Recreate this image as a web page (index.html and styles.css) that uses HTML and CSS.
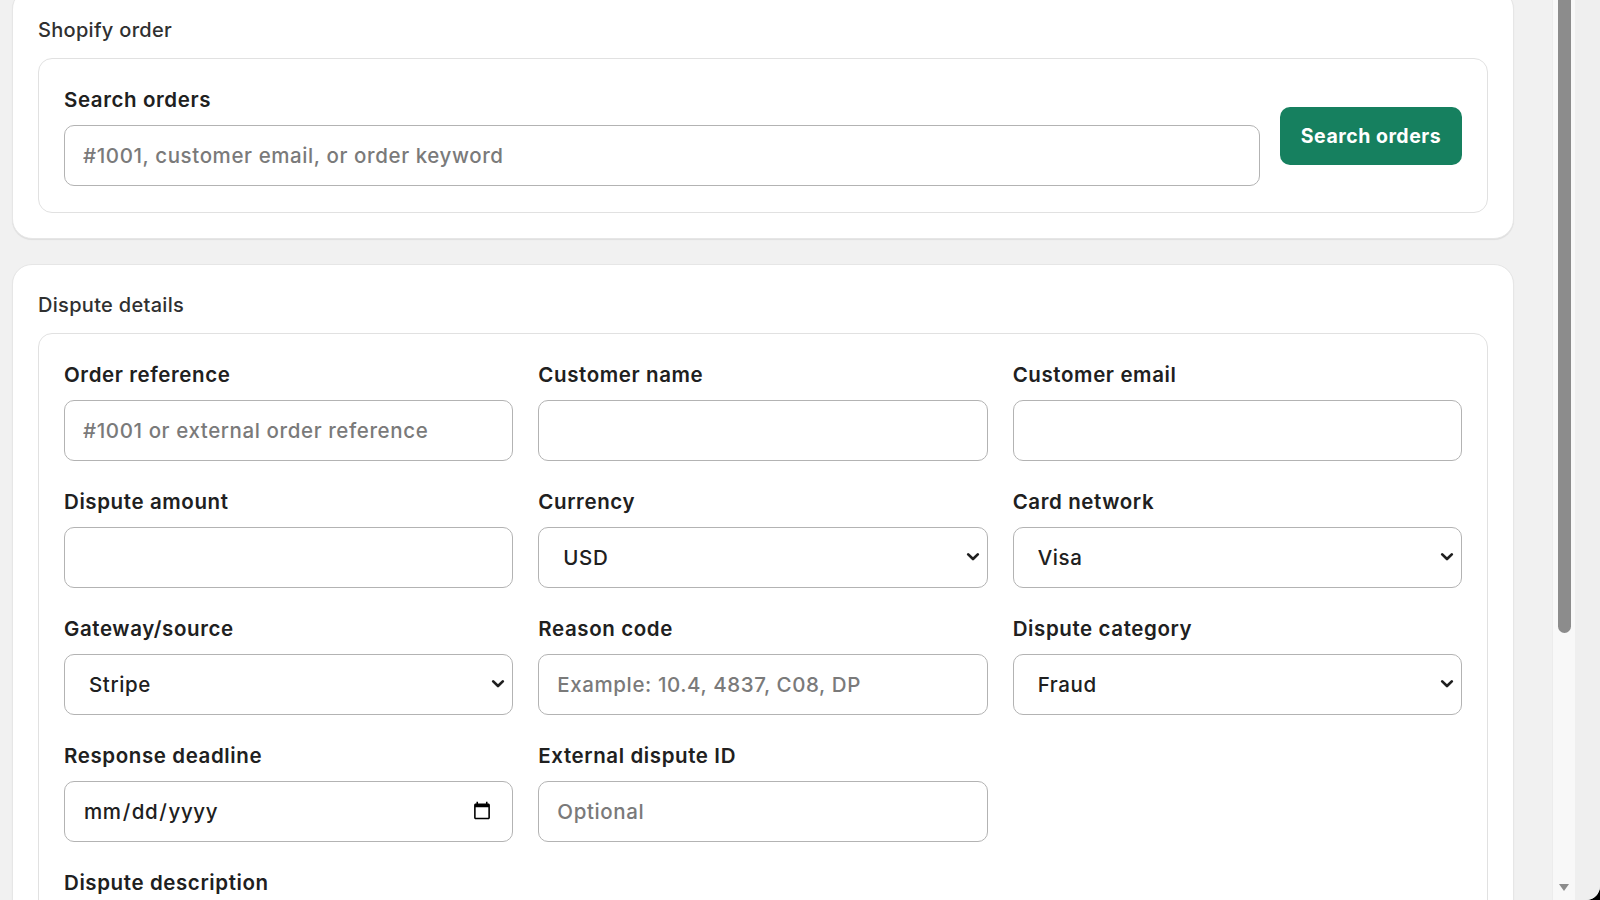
FILE: index.html
```html
<!DOCTYPE html>
<html lang="en">
<head>
<meta charset="utf-8">
<title>Dispute</title>
<link rel="stylesheet" href="styles.css">
</head>
<body>
  <main class="page">
    <div class="stack">
      <section class="card">
        <h2 class="card-title">Shopify order</h2>
        <div class="panel search-panel">
          <div class="field grow">
            <label class="label" for="q">Search orders</label>
            <input class="control" id="q" type="text" placeholder="#1001, customer email, or order keyword">
          </div>
          <button class="btn-primary" type="button">Search orders</button>
        </div>
      </section>

      <section class="card">
        <h2 class="card-title">Dispute details</h2>
        <div class="panel form-grid">
          <div class="field">
            <label class="label">Order reference</label>
            <input class="control" type="text" placeholder="#1001 or external order reference">
          </div>
          <div class="field">
            <label class="label">Customer name</label>
            <input class="control" type="text">
          </div>
          <div class="field">
            <label class="label">Customer email</label>
            <input class="control" type="email">
          </div>

          <div class="field">
            <label class="label">Dispute amount</label>
            <input class="control" type="text">
          </div>
          <div class="field">
            <label class="label">Currency</label>
            <div class="select-wrap">
              <select class="control select">
                <option>USD</option>
                <option>EUR</option>
              </select>
              <svg class="chevron" width="14" height="10" viewBox="0 0 14 10" aria-hidden="true"><path d="M2.2 2.4 L7 7 L11.8 2.4" fill="none" stroke="#1f1f1f" stroke-width="2.7" stroke-linecap="round" stroke-linejoin="round"/></svg>
            </div>
          </div>
          <div class="field">
            <label class="label">Card network</label>
            <div class="select-wrap">
              <select class="control select">
                <option>Visa</option>
                <option>Mastercard</option>
              </select>
              <svg class="chevron" width="14" height="10" viewBox="0 0 14 10" aria-hidden="true"><path d="M2.2 2.4 L7 7 L11.8 2.4" fill="none" stroke="#1f1f1f" stroke-width="2.7" stroke-linecap="round" stroke-linejoin="round"/></svg>
            </div>
          </div>

          <div class="field">
            <label class="label">Gateway/source</label>
            <div class="select-wrap">
              <select class="control select">
                <option>Stripe</option>
                <option>PayPal</option>
              </select>
              <svg class="chevron" width="14" height="10" viewBox="0 0 14 10" aria-hidden="true"><path d="M2.2 2.4 L7 7 L11.8 2.4" fill="none" stroke="#1f1f1f" stroke-width="2.7" stroke-linecap="round" stroke-linejoin="round"/></svg>
            </div>
          </div>
          <div class="field">
            <label class="label">Reason code</label>
            <input class="control" type="text" placeholder="Example: 10.4, 4837, C08, DP">
          </div>
          <div class="field">
            <label class="label">Dispute category</label>
            <div class="select-wrap">
              <select class="control select">
                <option>Fraud</option>
                <option>Not received</option>
              </select>
              <svg class="chevron" width="14" height="10" viewBox="0 0 14 10" aria-hidden="true"><path d="M2.2 2.4 L7 7 L11.8 2.4" fill="none" stroke="#1f1f1f" stroke-width="2.7" stroke-linecap="round" stroke-linejoin="round"/></svg>
            </div>
          </div>

          <div class="field">
            <label class="label">Response deadline</label>
            <input class="control date" type="date">
          </div>
          <div class="field">
            <label class="label">External dispute ID</label>
            <input class="control" type="text" placeholder="Optional">
          </div>
          <div class="field"></div>

          <div class="field span-all">
            <label class="label">Dispute description</label>
            <textarea class="control textarea"></textarea>
          </div>
        </div>
      </section>
    </div>
  </main>

  <div class="scrollbar">
    <div class="thumb"></div>
    <div class="arrow-down"></div>
  </div>
  <div class="frame-strip"></div>
</body>
</html>
```

FILE: styles.css
```css
html {
  background: #000;
}

body {
  margin: 0;
  width: 1600px;
  height: 900px;
  overflow: hidden;
  display: flex;
  background: #f1f1f1;
  border-bottom-right-radius: 14px;
  font-family: Inter, "Noto Sans", sans-serif;
  color: #303030;
}

.page {
  flex: 1;
  min-width: 0;
  padding: 0 38px 0 12px;
  overflow: hidden;
}

.stack {
  margin-top: -11px;
  display: flex;
  flex-direction: column;
  gap: 25px;
}

.card {
  background: #fff;
  border: 1px solid #e6e6e6;
  border-radius: 20px;
  box-shadow: 0 1px 1px rgba(0, 0, 0, 0.08);
  padding: 28px 25px 25px;
}

.card-title {
  margin: 0 0 16px;
  font-size: 20px;
  line-height: 24px;
  font-weight: 500;
  letter-spacing: 0.3px;
  color: #303030;
}

.panel {
  border: 1px solid #e1e1e1;
  border-radius: 14px;
  padding: 27px 25px 26px;
}

.search-panel {
  display: flex;
  align-items: center;
  gap: 20px;
}

.grow {
  flex: 1;
}

.field {
  display: flex;
  flex-direction: column;
  min-width: 0;
}

.label {
  font-size: 20.5px;
  line-height: 28px;
  font-weight: 600;
  letter-spacing: 0.6px;
  color: #202020;
  margin-bottom: 11px;
}

.control {
  box-sizing: border-box;
  height: 61px;
  width: 100%;
  border: 1px solid #b3b3b3;
  border-radius: 10px;
  background: #fff;
  padding: 0 18px;
  font-family: Inter, "Noto Sans", sans-serif;
  font-size: 20.5px;
  font-weight: 500;
  letter-spacing: 0.6px;
  color: #202020;
  outline: none;
}

.control::placeholder {
  color: #7a7a7a;
  opacity: 1;
}

.select-wrap {
  position: relative;
}

.select {
  appearance: none;
  -webkit-appearance: none;
  padding: 0 40px 0 24px;
}

.chevron {
  position: absolute;
  right: 8px;
  top: 25px;
  pointer-events: none;
}

.date {
  padding: 0 18px 0 18px;
}

.textarea {
  height: 120px;
  padding: 16px 18px;
  resize: none;
}

.span-all {
  grid-column: 1 / -1;
}

.form-grid {
  display: grid;
  grid-template-columns: repeat(3, 1fr);
  column-gap: 25px;
  row-gap: 27px;
}

.btn-primary {
  flex: 0 0 auto;
  width: 182px;
  height: 58px;
  border: none;
  border-radius: 10px;
  background: #16805f;
  color: #fff;
  font-family: Inter, "Noto Sans", sans-serif;
  font-size: 19.5px;
  font-weight: 700;
  letter-spacing: 0.5px;
  cursor: pointer;
}

.scrollbar {
  flex: 0 0 23px;
  background: #f8f8f8;
  border-left: 1px solid #ececec;
  box-sizing: border-box;
  display: flex;
  flex-direction: column;
  align-items: center;
}

.thumb {
  width: 13px;
  height: 643px;
  margin-top: -10px;
  border-radius: 7px;
  background: #8c8c8c;
}

.arrow-down {
  margin-top: auto;
  margin-bottom: 9px;
  width: 0;
  height: 0;
  border-left: 5px solid transparent;
  border-right: 5px solid transparent;
  border-top: 7px solid #8c8c8c;
}

.frame-strip {
  flex: 0 0 25px;
  background: #efefef;
}
```
